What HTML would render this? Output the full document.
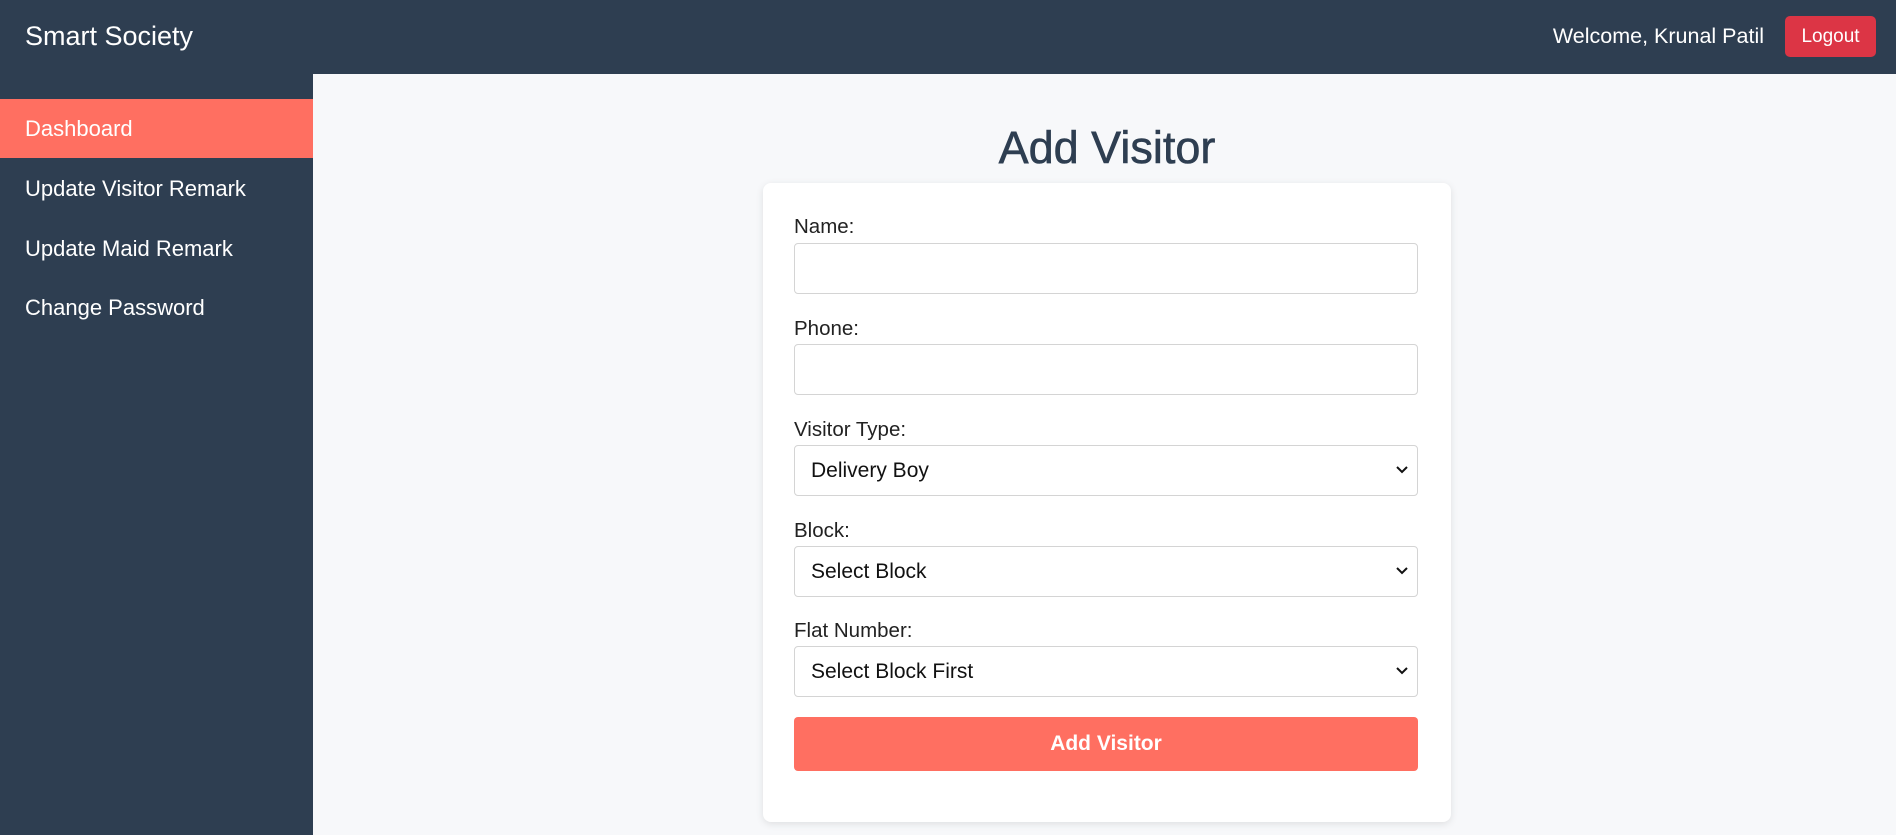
<!DOCTYPE html>
<html><head><style>
*{box-sizing:border-box;margin:0;padding:0}
body{width:1896px;height:835px;overflow:hidden;font-family:"Liberation Sans",sans-serif;background:#f7f8fa;position:relative}
.hdr{position:absolute;left:0;top:0;width:1896px;height:74px;background:#2e3e51;color:#fff}
.brand{position:absolute;left:25px;top:21px;font-size:27px}
.wel{position:absolute;right:132px;top:24px;font-size:21.5px}
.lo{position:absolute;left:1785px;top:16px;width:91px;height:41px;background:#dc3545;border-radius:5px;font-size:19px;text-align:center;line-height:41px}
.side{position:absolute;left:0;top:74px;width:313px;height:761px;background:#2e3e51}
.it{position:absolute;left:0;width:313px;height:59px;color:#fff;font-size:22px;padding-left:25px;line-height:59px}
.act{background:#ff6f61}
h1{position:absolute;left:763px;width:688px;top:122px;text-align:center;font-size:45px;font-weight:normal;color:#2e3e51;-webkit-text-stroke:0.6px #2e3e51}
.card{position:absolute;left:763px;top:183px;width:688px;height:639px;background:#fff;border-radius:8px;box-shadow:0 2px 8px rgba(0,0,0,.1)}
.lb{position:absolute;left:794px;font-size:20.5px;color:#222}
.in{position:absolute;left:794px;width:624px;height:51px;border:1px solid #d4d4d4;border-radius:4px;background:#fff;font-size:21px;padding-left:16px;line-height:49px;color:#111}
.in svg{position:absolute;right:9px;top:20px}
.btn{position:absolute;left:794px;top:717px;width:624px;height:54px;background:#ff6f61;border-radius:4px;color:#fff;font-size:21px;font-weight:bold;text-align:center;line-height:54px}
</style></head><body>
<div class="hdr"><div class="brand">Smart Society</div><div class="wel">Welcome, Krunal Patil</div><div class="lo">Logout</div></div>
<div class="side">
<div class="it act" style="top:25px">Dashboard</div>
<div class="it" style="top:85px">Update Visitor Remark</div>
<div class="it" style="top:145px">Update Maid Remark</div>
<div class="it" style="top:204px">Change Password</div>
</div>
<h1>Add Visitor</h1>
<div class="card"></div>
<div class="lb" style="top:215px">Name:</div><div class="in" style="top:243px"></div>
<div class="lb" style="top:317px">Phone:</div><div class="in" style="top:344px"></div>
<div class="lb" style="top:418px">Visitor Type:</div><div class="in" style="top:445px">Delivery Boy<svg width="12" height="8" viewBox="0 0 12 8"><path d="M1 1l5 5 5-5" stroke="#111" stroke-width="2" fill="none"/></svg></div>
<div class="lb" style="top:519px">Block:</div><div class="in" style="top:546px">Select Block<svg width="12" height="8" viewBox="0 0 12 8"><path d="M1 1l5 5 5-5" stroke="#111" stroke-width="2" fill="none"/></svg></div>
<div class="lb" style="top:619px">Flat Number:</div><div class="in" style="top:646px">Select Block First<svg width="12" height="8" viewBox="0 0 12 8"><path d="M1 1l5 5 5-5" stroke="#111" stroke-width="2" fill="none"/></svg></div>
<div class="btn">Add Visitor</div>
</body></html>
